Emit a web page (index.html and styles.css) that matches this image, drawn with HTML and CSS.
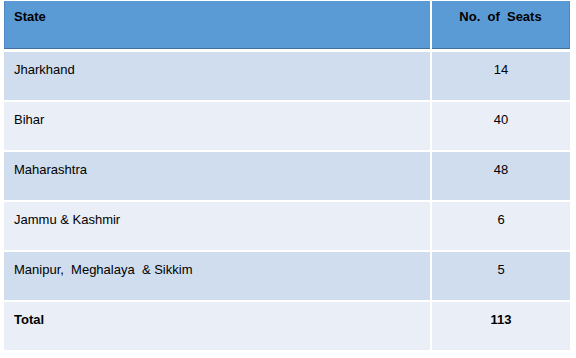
FILE: index.html
```html
<!DOCTYPE html>
<html>
<head>
<meta charset="utf-8">
<link rel="stylesheet" href="styles.css">
</head>
<body>
<div class="seats">
  <div class="cell head state">State</div>
  <div class="cell head num">No.&nbsp; of&nbsp; Seats</div>

  <div class="cell odd">Jharkhand</div>
  <div class="cell odd num">14</div>

  <div class="cell even">Bihar</div>
  <div class="cell even num">40</div>

  <div class="cell odd">Maharashtra</div>
  <div class="cell odd num">48</div>

  <div class="cell even">Jammu &amp; Kashmir</div>
  <div class="cell even num">6</div>

  <div class="cell odd">Manipur,&nbsp; Meghalaya&nbsp; &amp; Sikkim</div>
  <div class="cell odd num">5</div>

  <div class="cell even bold">Total</div>
  <div class="cell even num bold">113</div>
</div>
</body>
</html>
```

FILE: styles.css
```css
html, body {
  margin: 0;
  padding: 0;
  background: #ffffff;
}

body {
  padding: 1px 6px 0 4px;
  font-family: "Liberation Sans", Arial, sans-serif;
  font-size: 13px;
  color: #000000;
}

.seats {
  display: grid;
  grid-template-columns: 426px 138px;
  grid-template-rows: 49px repeat(6, 48px);
  column-gap: 2px;
  row-gap: 2px;
  align-items: start;
}

.cell {
  padding: 10px 10px 0 10px;
  line-height: 15px;
  box-sizing: border-box;
  height: 48px;
}

.head {
  background: #5b9bd5;
  font-weight: bold;
  padding-top: 8px;
  border-bottom: 1px solid #41719c;
}

.head.state {
  border-left: 1px solid #4f87c2;
  padding-left: 9px;
}

.head.num {
  border-right: 1px solid #4f87c2;
}

.odd {
  background: #cfddee;
}

.even {
  background: #e9eef7;
}

.num {
  text-align: center;
}

.bold {
  font-weight: bold;
}
```
